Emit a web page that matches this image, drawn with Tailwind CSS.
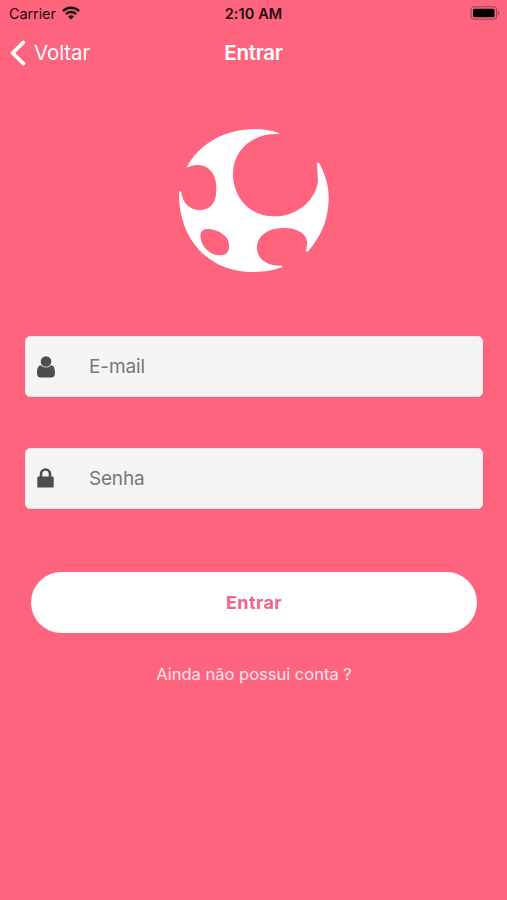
<!DOCTYPE html>
<html lang="pt-BR">
<head>
  <meta charset="UTF-8">
  <meta name="viewport" content="width=device-width, initial-scale=1.0">
  <title>Entrar</title>
  <script src="https://cdn.jsdelivr.net/npm/@tailwindcss/browser@4"></script>
</head>
<body class="min-h-screen bg-[#ff647f] font-['Inter','Liberation_Sans',sans-serif] overflow-hidden">
  <!-- Status bar -->
  <div class="grid grid-cols-3 items-center h-7 pl-[9px] pr-[7px] text-[14.5px] leading-none text-[#1c0b0e]">
    <div class="flex items-center gap-1.5">
      <span class="tracking-[-0.1px]">Carrier</span>
      <svg class="w-[18px] h-[14px] -mt-0.5" viewBox="0 0 18 14" fill="none" stroke="currentColor" stroke-width="2.3">
        <path d="M0.9 5.1a11.5 11.5 0 0 1 16.2 0"/>
        <path d="M3.9 8.1a7.2 7.2 0 0 1 10.2 0"/>
        <path d="M9 13.6L6 10.6a4.3 4.3 0 0 1 6 0z" fill="currentColor" stroke="none"/>
      </svg>
    </div>
    <span class="text-center font-semibold tracking-[0.1px] -ml-0.5">2:10 AM</span>
    <svg class="w-[30px] h-[14px] justify-self-end -mt-0.5" viewBox="0 0 30 14">
      <rect x="1" y="0.8" width="25.5" height="12.4" rx="3.2" fill="none" stroke="#a04052" stroke-width="1.1"/>
      <rect x="3" y="2.8" width="21.5" height="8.4" rx="1.5" fill="#000"/>
      <path d="M27.8 4.8a2.4 2.4 0 0 1 0 4.4z" fill="#a04052"/>
    </svg>
  </div>

  <!-- Navigation -->
  <div class="grid grid-cols-3 items-center h-[50px] pl-[10px] pr-[10px] text-[20.5px] leading-none text-white">
    <a class="flex items-center gap-2" href="#">
      <svg class="w-4 h-[26px] -mt-px" viewBox="0 0 16 26" fill="none" stroke="currentColor" stroke-width="3.6" stroke-linecap="round" stroke-linejoin="round">
        <path d="M13.4 2.4L2.6 13l10.8 10.6"/>
      </svg>
      <span class="tracking-[-0.1px]">Voltar</span>
    </a>
    <h1 class="text-center font-semibold tracking-[-0.3px]">Entrar</h1>
  </div>

  <!-- Logo -->
  <svg class="block ml-[165px] mt-[37px] w-[180px] h-[170px]" viewBox="0 0 540 510" fill="#fff">
    <path fill-rule="evenodd" d="M342 54C245 20 115 58 65 158C94 144 122 148 138 168C153 186 156 211 153 240C150 267 132 285 105 285C74 285 51 263 49 231Q43 225 42 234C41 372 130 471 262 471C295 471 328 466 353 456Q351 450 344 452C306 452 276 432 276 398C277 362 309 340 352 339C399 338 430 359 426 388L423 409Q427 412 431 407C476 355 491 303 491 247C491 211 480 176 463 145Q457 141 456 148L459 200C450 258 396 304 327 304C252 304 204 245 204 177C204 110 255 57 335 57Q344 56 342 54ZM107 355C112 337 144 339 165 352C184 364 191 374 192 390C193 411 185 421 164 421C132 421 102 388 107 355Z"/>
  </svg>

  <!-- Login form -->
  <form class="flex flex-col pl-[25px] pr-[24px] pt-[51px]">
    <label class="flex items-center h-[61px] mb-[51px] pl-[11px] rounded-[5px] bg-[#f5f5f5] border border-[#fcdfe3]">
      <svg class="w-[18px] h-[22px] shrink-0" viewBox="0 0 18 22" fill="#4d4d4d">
        <path d="M3.7 9.3C1 9.8 0 12.8 0 17.3C0 20.2 1.5 21.5 3.6 21.5H14.2C16.5 21.5 18 20.2 18 17.3C18 12.8 17 9.8 14.2 9.3A7.3 7.3 0 0 1 3.7 9.3Z"/>
        <circle cx="9" cy="5.5" r="5.3"/>
      </svg>
      <input type="email" placeholder="E-mail" class="flex-1 ml-[34px] pt-0.5 text-[19px] tracking-[-0.1px] text-[#777] placeholder:text-[#777] outline-none">
    </label>
    <label class="flex items-center h-[61px] mb-[63px] pl-[11px] rounded-[5px] bg-[#f5f5f5] border border-[#fcdfe3]">
      <svg class="w-[17px] h-5 -mt-0.5 shrink-0" viewBox="0 0 17 20">
        <path d="M4 10V6a4.5 4.5 0 0 1 9 0V10" fill="none" stroke="#4d4d4d" stroke-width="2.6"/>
        <rect x="0.3" y="8.6" width="16.4" height="11" rx="1.2" fill="#4d4d4d"/>
      </svg>
      <input type="password" placeholder="Senha" class="flex-1 ml-[35px] pt-0.5 text-[19px] tracking-[-0.2px] text-[#777] placeholder:text-[#777] outline-none">
    </label>
    <button type="button" class="h-[61px] mx-1.5 rounded-full bg-white text-[18px] font-bold tracking-[0.4px] text-[#f4648a]">Entrar</button>
    <a class="mt-[29px] text-center text-[16.5px] leading-6 text-[#ffe5e9]" href="#">Ainda não possui conta ?</a>
  </form>
</body>
</html>
